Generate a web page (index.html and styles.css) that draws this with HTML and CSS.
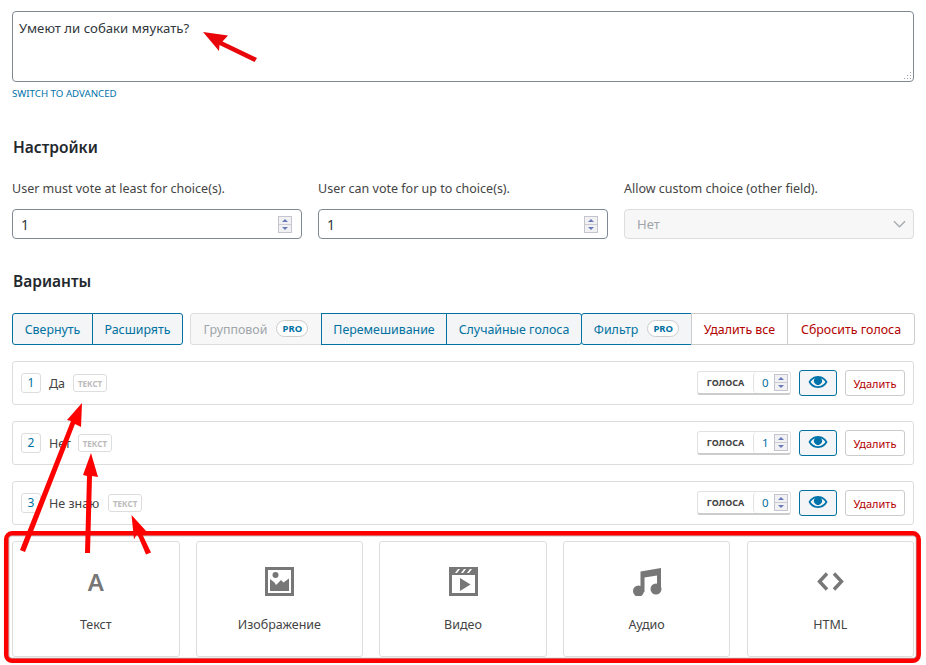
FILE: index.html
```html
<!DOCTYPE html>
<html lang="ru">
<head>
<meta charset="utf-8">
<title>Опрос</title>
<link rel="stylesheet" href="styles.css">
</head>
<body>
<div class="page">
  <div class="question-wrap">
    <textarea class="question">Умеют ли собаки мяукать?</textarea>
    <svg class="grip" viewBox="0 0 8 8" width="8" height="8"><path fill="#9aa0a6" d="M6 0h1v1H6zM6 3h1v1H6zM3 3h1v1H3zM6 6h1v1H6zM3 6h1v1H3zM0 6h1v1H0z"/></svg>
  </div>
  <a class="switch">SWITCH TO ADVANCED</a>

  <h2 class="heading settings-heading">Настройки</h2>
  <div class="settings">
    <div class="field">
      <label class="field-label">User must vote at least for choice(s).</label>
      <div class="num-input"><input class="text-input" type="text" value="1">
        <span class="spin spin-lg"><i class="up"></i><i class="down"></i></span></div>
    </div>
    <div class="field">
      <label class="field-label">User can vote for up to choice(s).</label>
      <div class="num-input"><input class="text-input" type="text" value="1">
        <span class="spin spin-lg"><i class="up"></i><i class="down"></i></span></div>
    </div>
    <div class="field">
      <label class="field-label">Allow custom choice (other field).</label>
      <div class="select-wrap">
        <select class="select" disabled><option>Нет</option></select>
        <svg class="chevron" viewBox="0 0 14 8" width="13" height="8"><path d="M1 1l6 6 6-6" fill="none" stroke="#a9adb2" stroke-width="1.6"/></svg>
      </div>
    </div>
  </div>

  <h2 class="heading variants-heading">Варианты</h2>
  <div class="toolbar">
    <div class="group group-first">
      <button class="btn btn-blue w-80">Свернуть</button>
      <button class="btn btn-blue w-91">Расширять</button>
    </div>
    <div class="group group-main">
      <button class="btn btn-disabled w-131">Групповой <span class="pro">PRO</span></button>
      <button class="btn btn-blue w-125">Перемешивание</button>
      <button class="btn btn-blue w-135">Случайные голоса</button>
      <button class="btn btn-blue w-110">Фильтр <span class="pro">PRO</span></button>
      <button class="btn btn-red w-96">Удалить все</button>
      <button class="btn btn-red w-128">Сбросить голоса</button>
    </div>
  </div>

  <div class="items">
    <div class="item">
      <span class="index">1</span><span class="item-name">Да</span><span class="tag">ТЕКСТ</span>
      <div class="item-actions">
        <div class="votes"><span class="votes-label">ГОЛОСА</span><span class="votes-num">0<span class="spin"><i class="up"></i><i class="down"></i></span></span></div>
        <button class="eye-btn"><svg viewBox="0 0 20 14" width="20" height="14"><path d="M10 1C5.500 1 2 4 .5 7 2 10 5.500 13 10 13s8-3 9.500-6C18 4 14.500 1 10 1zm0 10.200C7 11.200 4.200 9.500 2.600 7 3.800 5.300 5.200 4 7 3.300a4 4 0 1 0 6 0c1.800.7 3.200 2 4.400 3.700-1.600 2.500-4.400 4.200-7.400 4.200z" fill="#0073aa"/></svg></button>
        <button class="del-btn">Удалить</button>
      </div>
    </div>
    <div class="item">
      <span class="index">2</span><span class="item-name">Нет</span><span class="tag tag-narrow">ТЕКСТ</span>
      <div class="item-actions">
        <div class="votes"><span class="votes-label">ГОЛОСА</span><span class="votes-num">1<span class="spin"><i class="up"></i><i class="down"></i></span></span></div>
        <button class="eye-btn"><svg viewBox="0 0 20 14" width="20" height="14"><path d="M10 1C5.500 1 2 4 .5 7 2 10 5.500 13 10 13s8-3 9.500-6C18 4 14.500 1 10 1zm0 10.200C7 11.200 4.200 9.500 2.600 7 3.800 5.300 5.200 4 7 3.300a4 4 0 1 0 6 0c1.800.7 3.200 2 4.400 3.700-1.600 2.500-4.400 4.200-7.400 4.200z" fill="#0073aa"/></svg></button>
        <button class="del-btn">Удалить</button>
      </div>
    </div>
    <div class="item">
      <span class="index">3</span><span class="item-name">Не знаю</span><span class="tag tag-wide">ТЕКСТ</span>
      <div class="item-actions">
        <div class="votes"><span class="votes-label">ГОЛОСА</span><span class="votes-num">0<span class="spin"><i class="up"></i><i class="down"></i></span></span></div>
        <button class="eye-btn"><svg viewBox="0 0 20 14" width="20" height="14"><path d="M10 1C5.500 1 2 4 .5 7 2 10 5.500 13 10 13s8-3 9.500-6C18 4 14.500 1 10 1zm0 10.200C7 11.200 4.200 9.500 2.600 7 3.800 5.300 5.200 4 7 3.300a4 4 0 1 0 6 0c1.800.7 3.200 2 4.400 3.700-1.600 2.500-4.400 4.200-7.400 4.200z" fill="#0073aa"/></svg></button>
        <button class="del-btn">Удалить</button>
      </div>
    </div>
  </div>

  <div class="cards">
    <div class="card">
      <span class="card-icon card-letter">A</span>
      <span class="card-label">Текст</span>
    </div>
    <div class="card">
      <span class="card-icon"><svg viewBox="0 0 29 29" width="29" height="29"><path fill="#777" fill-rule="evenodd" d="M0 0h29v29H0zM3 3v23h23V3z"/><path fill="#777" d="M5 12l4.500 3.500 1.500 2.500 5-5 2.500 2.500 5.500-4v12.500H5z"/><circle cx="10.500" cy="8" r="3" fill="#777"/></svg></span>
      <span class="card-label">Изображение</span>
    </div>
    <div class="card">
      <span class="card-icon"><svg viewBox="0 0 29 29" width="29" height="29"><path fill="#777" fill-rule="evenodd" d="M0 0h29v29H0zM3 8v18h23V8z"/><path fill="#fff" d="M6 6l3-4h2l-3 4zM12 6l3-4h2l-3 4zM18 6l3-4h2l-3 4z"/><path fill="#777" d="M11 11l10.500 6.500L11 24z"/></svg></span>
      <span class="card-label">Видео</span>
    </div>
    <div class="card">
      <span class="card-icon"><svg viewBox="0 0 30 29" width="30" height="29"><path fill="#777" d="M8.500 4.500L29 1v22h-4V8.500L12.500 10.500V25h-4z"/><circle cx="6.500" cy="24" r="5.500" fill="#777"/><circle cx="24" cy="22" r="5.500" fill="#777"/></svg></span>
      <span class="card-label">Аудио</span>
    </div>
    <div class="card">
      <span class="card-icon"><svg viewBox="0 0 29 29" width="29" height="29"><path fill="none" stroke="#777" stroke-width="3.400" d="M11 6.500L3.500 14.500l7.500 8M18 6.500l7.500 8-7.500 8"/></svg></span>
      <span class="card-label">HTML</span>
    </div>
  </div>
</div>

<svg class="annotations" viewBox="0 0 926 665" width="926" height="665">
  <rect x="8.800" y="535.800" width="907.500" height="122.500" rx="3" fill="none" stroke="#555" stroke-opacity=".55" stroke-width="1"/>
  <rect x="6.200" y="533.300" width="912.500" height="127.500" rx="6" fill="none" stroke="#fe0000" stroke-width="4.500"/>
  <path fill="#e8060b" d="M203 32l25 3.500-5.500 6 34.500 16.500-2.500 4-35-17-.500 6z"/>
  <path fill="#fe0000" d="M82 403l-1 24-6-3-50 128-5-2 51-129-4-1z"/>
  <path fill="#fe0000" d="M91 453l7 24-6-1-2 77h-5l2-77-4-1z"/>
  <path fill="#fe0000" d="M131.500 515l15.500 17-6-.500 10 21-5 2-9-21-3 6z"/>
</svg>
</body>
</html>
```

FILE: styles.css
```css
* { box-sizing: border-box; }
html, body { margin: 0; padding: 0; background: #fff; }
body {
  width: 926px;
  height: 665px;
  overflow: hidden;
  position: relative;
  font-family: "Noto Sans", "Open Sans", sans-serif;
  font-size: 13px;
  color: #444;
}
.page { padding: 11px 12px 0; }

.question-wrap { position: relative; height: 71px; }
.question {
  display: block;
  width: 902px;
  height: 71px;
  padding: 7px 6px;
  border: 1px solid #7e8993;
  border-radius: 4px;
  font: 13.200px/18px "Noto Sans", sans-serif;
  color: #32373c;
  resize: none;
  outline: none;
}
.grip { position: absolute; right: 2px; bottom: 2px; }
.switch {
  display: block;
  margin-top: 5px;
  height: 14px;
  font-size: 9.700px;
  line-height: 14px;
  color: #0073aa;
}
.heading {
  margin: 0 0 0 1px;
  font-size: 15.500px;
  line-height: 22px;
  font-weight: 600;
  color: #23282d;
}
.settings-heading { margin-top: 35px; }
.settings { display: flex; gap: 16px; margin-top: 22px; }
.field { width: 290px; }
.field-label { display: block; height: 18px; line-height: 18px; font-size: 12.500px; color: #444; }
.num-input, .select-wrap { position: relative; margin-top: 11px; height: 30px; }
.text-input, .select {
  display: block;
  width: 100%;
  height: 30px;
  border: 1px solid #7e8993;
  border-radius: 4px;
  background: #fff;
  padding: 0 8px;
  font: 14px "Noto Sans", sans-serif;
  color: #32373c;
  outline: none;
}
.select {
  appearance: none;
  padding: 0 12px;
  border-color: #dddddd;
  background: #f7f7f7;
  color: #a0a5aa;
  font-size: 13px;
  opacity: 1;
}
.chevron { position: absolute; right: 8px; top: 11px; }

.spin {
  display: inline-flex;
  flex-direction: column;
  width: 14px;
  height: 17px;
  background: #c9cad2;
  border: 1px solid #c4c5ce;
  gap: 1px;
}
.spin-lg { position: absolute; right: 10px; top: 7px; }
.spin i { flex: 1; position: relative; background: #f1f1f4; }
.spin i::after {
  content: "";
  position: absolute;
  left: 3px;
  top: 2px;
  border-left: 3px solid transparent;
  border-right: 3px solid transparent;
}
.spin .up::after { border-bottom: 3px solid #6a7ab8; }
.spin .down::after { border-top: 3px solid #6a7ab8; }

.variants-heading { margin-top: 31px; }
.toolbar { display: flex; gap: 7px; margin-top: 21px; width: 903px; }
.group { display: flex; }
.btn {
  height: 32px;
  padding: 1px 0 0;
  border: 1px solid #0071a1;
  background: #f3f5f6;
  color: #0071a1;
  font: 12.400px "Noto Sans", sans-serif;
  display: flex;
  align-items: center;
  justify-content: center;
  gap: 9px;
  margin-right: -1px;
  position: relative;
}
.w-80 { width: 81px; border-radius: 3px 0 0 3px; }
.w-91 { width: 91px; border-radius: 0 3px 3px 0; margin-right: 0; }
.w-131 { width: 132px; }
.w-125 { width: 126px; }
.w-135 { width: 136px; border-radius: 0 3px 3px 0; }
.w-110 { width: 111px; border-radius: 3px 0 0 3px; }
.w-96 { width: 97px; }
.w-128 { width: 128px; margin-right: 0; border-radius: 0 3px 3px 0; }
.btn-disabled { border-color: #ddd; background: #f7f7f7; color: #a0a5aa; border-radius: 3px 0 0 3px; }
.btn-red { border-color: #ccc; background: #fff; color: #b30000; }
.pro {
  display: inline-block;
  width: 32px;
  height: 17px;
  line-height: 15px;
  text-align: center;
  border: 1px solid #ccc;
  border-radius: 9px;
  background: #fff;
  color: #0071a1;
  font-size: 9.500px;
  font-weight: 700;
  margin-top: -2px;
}

.items { display: flex; flex-direction: column; gap: 16px; margin-top: 16px; }
.item {
  display: flex;
  align-items: center;
  height: 44px;
  padding: 0 8px 0 8px;
  border: 1px solid #ddd;
  border-radius: 3px;
  background: #fff;
}
.index {
  width: 20px;
  height: 20px;
  line-height: 18px;
  text-align: center;
  border: 1px solid #ddd;
  border-radius: 3px;
  color: #0071a1;
  font-size: 12px;
}
.item-name { margin-left: 8px; padding-top: 1px; font-size: 12.500px; color: #444; }
.tag {
  margin-left: 8px;
  width: 34px;
  height: 18px;
  line-height: 17px;
  text-align: center;
  border: 1px solid #ddd;
  border-radius: 3px;
  font-size: 8px;
  font-weight: 700;
  color: #bbb;
}
.tag-narrow { margin-left: 7px; }
.tag-wide { margin-left: 9px; }
.item-actions { margin-left: auto; display: flex; align-items: center; gap: 8px; }
.votes {
  display: flex;
  align-items: center;
  width: 94px;
  height: 24px;
  border: 1px solid #e2e2e2;
  border-bottom: 2px solid #ccc;
  border-radius: 3px;
  margin-top: -1px;
}
.votes-label { width: 55px; padding-top: 1px; text-align: center; font-size: 9px; font-weight: 700; color: #444; }
.votes-num {
  flex: 1;
  height: 100%;
  display: flex;
  align-items: center;
  gap: 5px;
  padding-left: 8px;
  border-left: 1px solid #e2e2e2;
  border-radius: 4px 0 0 4px;
  color: #0071a1;
  font-size: 11.500px;
}
.eye-btn {
  width: 38px;
  height: 26px;
  padding: 0 0 2px;
  border: 1px solid #0071a1;
  border-radius: 3px;
  background: #f3f5f6;
  display: flex;
  align-items: center;
  justify-content: center;
}
.del-btn {
  width: 60px;
  height: 26px;
  padding: 0;
  border: 1px solid #ccc;
  border-radius: 3px;
  background: #fff;
  color: #b30000;
  font: 11px "Noto Sans", sans-serif;
}

.cards { display: flex; justify-content: space-between; margin-top: 16px; }
.card {
  width: 167.500px;
  height: 116px;
  border: 1px solid #ddd;
  border-radius: 3px;
  display: flex;
  flex-direction: column;
  align-items: center;
  background: #fff;
}
.card-icon { height: 29px; margin-top: 25px; display: flex; align-items: center; justify-content: center; }
.card-letter { font-size: 24px; font-weight: 600; color: #777; line-height: 29px; }
.card-label { margin-top: 20px; font-size: 12.500px; line-height: 18px; color: #444; }

.annotations { position: absolute; left: 0; top: 0; pointer-events: none; }
```
